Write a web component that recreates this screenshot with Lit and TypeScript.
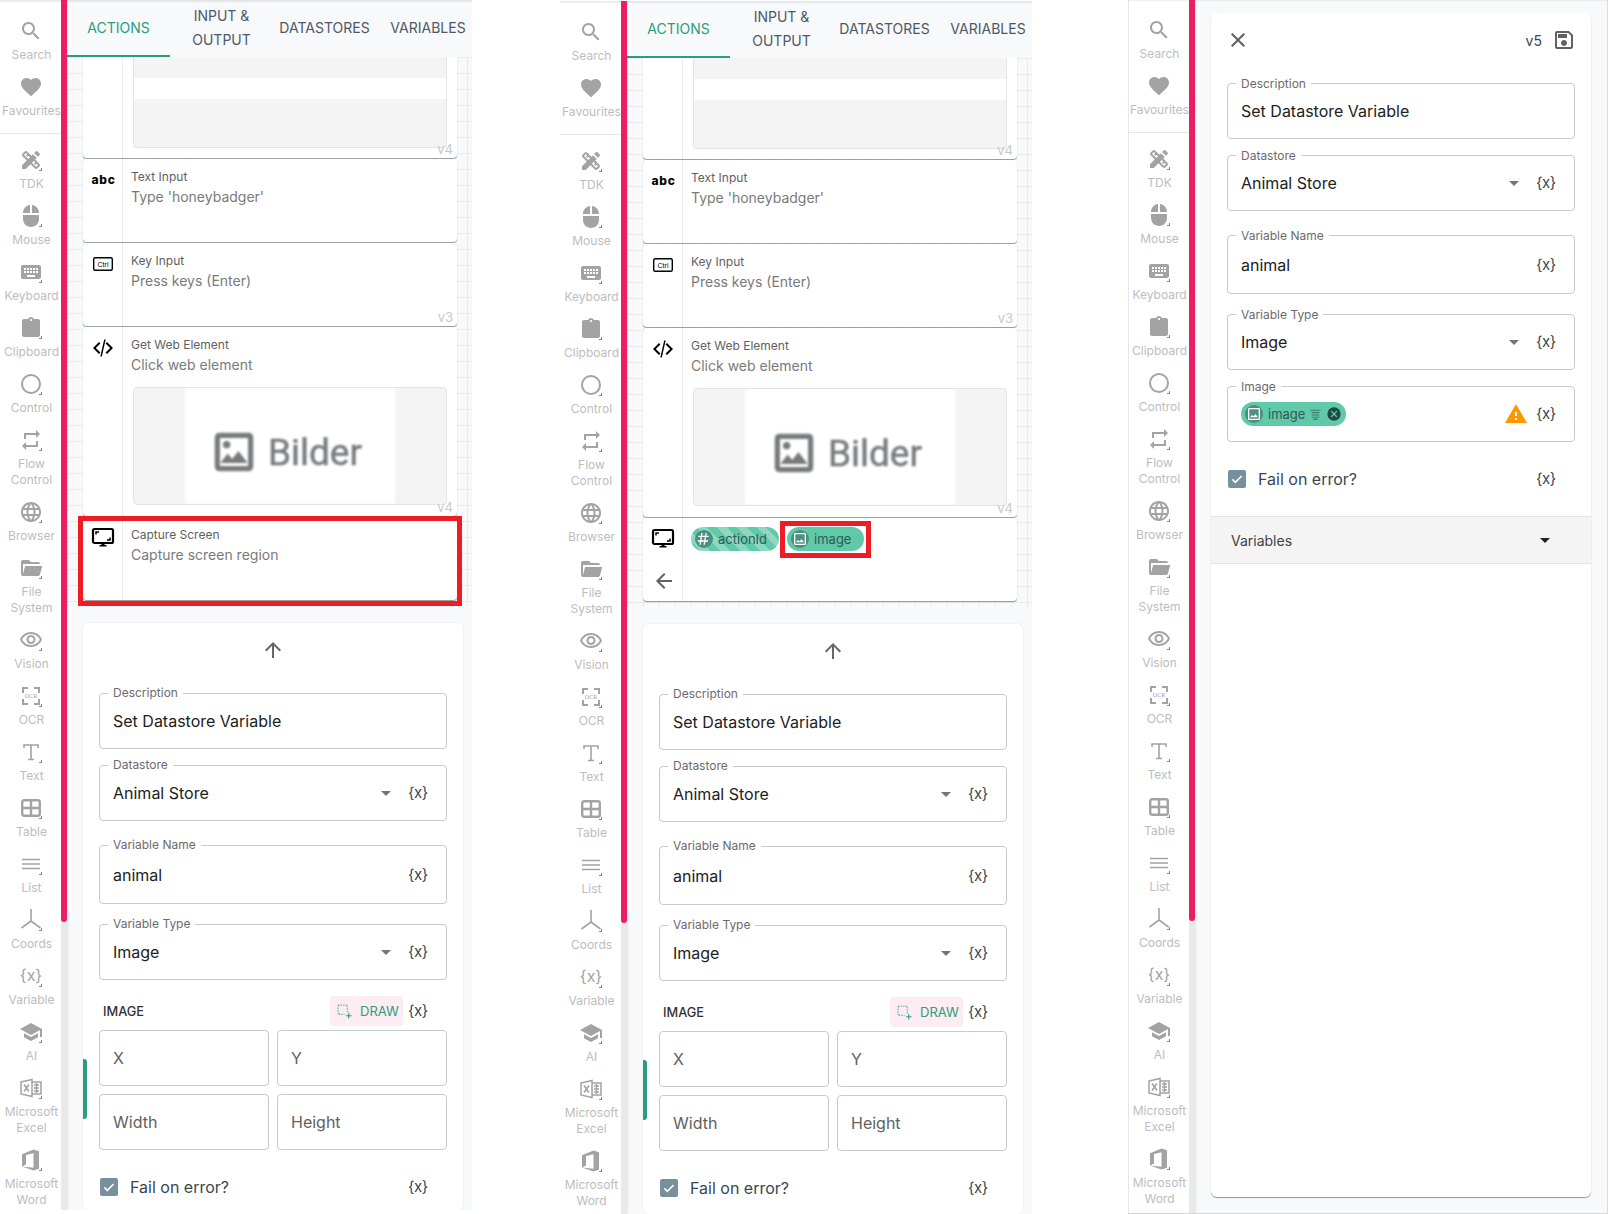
import { LitElement, css, html, svg } from "lit";
import { customElement } from "lit/decorators.js";

const path = (d: string) => svg`<path d=${d} fill="currentColor"></path>`;
const line = (d: string, w = 2) =>
  svg`<path d=${d} fill="none" stroke="currentColor" stroke-width=${w}></path>`;

const ICONS = {
  search: path("M15.5 14h-.79l-.28-.27C15.41 12.59 16 11.11 16 9.5 16 5.91 13.09 3 9.5 3S3 5.91 3 9.5 5.91 16 9.5 16c1.61 0 3.09-.59 4.23-1.57l.27.28v.79l5 4.99L20.49 19l-4.99-5zm-6 0C7.01 14 5 11.99 5 9.5S7.01 5 9.5 5 14 7.01 14 9.5 11.99 14 9.5 14z"),
  heart: path("M12 21.35l-1.45-1.32C5.4 15.36 2 12.28 2 8.5 2 5.42 4.42 3 7.5 3c1.74 0 3.41.81 4.5 2.09C13.09 3.81 14.76 3 16.5 3 19.58 3 22 5.42 22 8.5c0 3.78-3.4 6.86-8.55 11.54L12 21.35z"),
  tools: path("M16.24 11.51l1.57-1.57-3.75-3.75-1.57 1.57-4.14-4.13c-.78-.78-2.05-.78-2.83 0l-1.9 1.9c-.78.78-.78 2.05 0 2.83l4.13 4.13L3 17.25V21h3.75l4.76-4.76 4.13 4.13c.95.95 2.23.6 2.83 0l1.9-1.9c.78-.78.78-2.05 0-2.83l-4.13-4.13zm-7.06-.44L5.04 6.94l1.89-1.9L8.2 6.31 7.02 7.5l1.41 1.41 1.19-1.19 1.45 1.45-1.89 1.9zm7.88 7.89l-4.13-4.14 1.9-1.9 1.45 1.45-1.19 1.19 1.41 1.41 1.19-1.19 1.27 1.27-1.9 1.91zM20.71 7.04a.996.996 0 000-1.41l-2.34-2.34c-.47-.47-1.12-.29-1.41 0l-1.83 1.83 3.75 3.75 1.83-1.83z"),
  mouse: path("M13 1.07V9h7c0-4.08-3.05-7.44-7-7.93zM4 15c0 4.42 3.58 8 8 8s8-3.58 8-8v-4H4v4zm7-13.93C7.05 1.56 4 4.92 4 9h7V1.07z"),
  keyboard: path("M20 5H4c-1.1 0-1.99.9-1.99 2L2 17c0 1.1.9 2 2 2h16c1.1 0 2-.9 2-2V7c0-1.1-.9-2-2-2zm-9 3h2v2h-2V8zm0 3h2v2h-2v-2zM8 8h2v2H8V8zm0 3h2v2H8v-2zm-1 2H5v-2h2v2zm0-3H5V8h2v2zm9 7H8v-2h8v2zm0-4h-2v-2h2v2zm0-3h-2V8h2v2zm3 3h-2v-2h2v2zm0-3h-2V8h2v2z"),
  clipboard: path("M19 3h-4.18C14.4 1.84 13.3 1 12 1c-1.3 0-2.4.84-2.82 2H5c-1.1 0-2 .9-2 2v14c0 1.1.9 2 2 2h14c1.1 0 2-.9 2-2V5c0-1.1-.9-2-2-2zm-7 0c.55 0 1 .45 1 1s-.45 1-1 1-1-.45-1-1 .45-1 1-1z"),
  control: svg`<circle cx="12" cy="12" r="9" fill="none" stroke="currentColor" stroke-width="2"></circle>`,
  flow: path("M7 7h10v3l4-4-4-4v3H5v6h2V7zm10 10H7v-3l-4 4 4 4v-3h12v-6h-2v4z"),
  globe: path("M11.99 2C6.47 2 2 6.48 2 12s4.47 10 9.99 10C17.52 22 22 17.52 22 12S17.52 2 11.99 2zm6.93 6h-2.95c-.32-1.25-.78-2.45-1.38-3.56 1.84.63 3.37 1.91 4.33 3.56zM12 4.04c.83 1.2 1.48 2.53 1.91 3.96h-3.82c.43-1.43 1.08-2.76 1.91-3.96zM4.26 14C4.1 13.36 4 12.69 4 12s.1-1.36.26-2h3.38c-.08.66-.14 1.32-.14 2 0 .68.06 1.34.14 2H4.26zm.82 2h2.95c.32 1.25.78 2.45 1.38 3.56-1.84-.63-3.37-1.9-4.33-3.56zm2.95-8H5.08c.96-1.66 2.49-2.93 4.33-3.56C8.81 5.55 8.35 6.75 8.03 8zM12 19.96c-.83-1.2-1.48-2.53-1.91-3.96h3.82c-.43 1.43-1.08 2.76-1.91 3.96zM14.34 14H9.66c-.09-.66-.16-1.32-.16-2 0-.68.07-1.35.16-2h4.68c.09.65.16 1.32.16 2 0 .68-.07 1.34-.16 2zm.25 5.56c.6-1.11 1.06-2.31 1.38-3.56h2.95c-.96 1.65-2.49 2.93-4.33 3.56zM16.36 14c.08-.66.14-1.32.14-2 0-.68-.06-1.34-.14-2h3.38c.16.64.26 1.31.26 2s-.1 1.36-.26 2h-3.38z"),
  folder: path("M19 20H4c-1.11 0-2-.9-2-2V6c0-1.11.89-2 2-2h6l2 2h7a2 2 0 012 2H4v10l2.14-8h17.07l-2.28 8.5c-.23.87-1.01 1.5-1.93 1.5z"),
  eye: path("M12 6c3.79 0 7.17 2.13 8.82 5.5C19.17 14.87 15.79 17 12 17s-7.17-2.13-8.82-5.5C4.83 8.13 8.21 6 12 6m0-2C7 4 2.73 7.11 1 11.5 2.73 15.89 7 19 12 19s9.27-3.11 11-7.5C21.27 7.11 17 4 12 4zm0 5c1.38 0 2.5 1.12 2.5 2.5S13.38 14 12 14s-2.5-1.12-2.5-2.5S10.62 9 12 9m0-2c-2.48 0-4.5 2.02-4.5 4.5S9.52 16 12 16s4.5-2.02 4.5-4.5S14.48 7 12 7z"),
  ocr: svg`${line("M4 9V4h5M15 4h5v5M20 15v5h-5M9 20H4v-5")}<text x="12" y="14" font-size="6" text-anchor="middle" font-family="Liberation Serif, serif" fill="currentColor">OCR</text>`,
  text: svg`${line("M5 8V5h14v3M12 5v14.5M9 19.5h6", 1.6)}`,
  table: svg`<rect x="3.2" y="4.2" width="17.6" height="15.6" rx="2" fill="none" stroke="currentColor" stroke-width="2.4"></rect>${line("M3 12h18M12 4v16", 2.4)}`,
  list: svg`${line("M3 7.5h18M3 12h18M3 16.5h18", 1.6)}`,
  coords: svg`${line("M12 1v12M12 13L2.5 20M12 13l9.5 7", 1.6)}`,
  variable: svg`<text x="12" y="17" font-size="16" text-anchor="middle" font-family="Inter, sans-serif" fill="currentColor">{x}</text>`,
  school: path("M5 13.18v4L12 21l7-3.82v-4L12 17l-7-3.82zM12 3L1 9l11 6 9-4.91V17h2V9L12 3z"),
  excel: svg`${line("M2 6l11-2.5v17L2 18zM13 6h9v12h-9", 1.5)}${line("M5 8.5l5 7M10 8.5l-5 7", 1.6)}${line("M15 9h5M15 12h5M15 15h5M17.5 7v10", 1.5)}`,
  word: path("M3 6.2L14.5 1.5 20 3.2v17.6l-5.5 1.7L3 18.4l11.5 1.4V5.3L7 7v9.5L3 18.4z"),
  code: path("M9.4 16.6L4.8 12l4.6-4.6L8 6l-6 6 6 6 1.4-1.4zm5.2 0l4.6-4.6-4.6-4.6L16 6l6 6-6 6-1.4-1.4zM13.2 3.5h1.5L10.8 20.5H9.3z"),
  ctrl: svg`<rect x="2.7" y="5.7" width="18.6" height="12.6" rx="1.5" fill="none" stroke="currentColor" stroke-width="1.4"></rect><text x="12" y="14.6" font-size="7" text-anchor="middle" font-family="Liberation Sans, sans-serif" fill="currentColor">Ctrl</text>`,
  monitor: svg`<rect x="2" y="3" width="20" height="14" rx="1.5" fill="none" stroke="currentColor" stroke-width="2.2"></rect>${line("M5 8.5V6h3M19 11.5V14h-3", 1.5)}${path("M10.5 17h3v2h2v1.6h-7V19h2z")}`,
  up: path("M4 12l1.41 1.41L11 7.83V20h2V7.83l5.58 5.59L20 12l-8-8-8 8z"),
  back: path("M20 11H7.83l5.59-5.59L12 4l-8 8 8 8 1.41-1.41L7.83 13H20v-2z"),
  close: path("M19 6.41L17.59 5 12 10.59 6.41 5 5 6.41 10.59 12 5 17.59 6.41 19 12 13.41 17.59 19 19 17.59 13.41 12z"),
  save: path("M17 3H5c-1.11 0-2 .9-2 2v14c0 1.1.89 2 2 2h14c1.1 0 2-.9 2-2V7l-4-4zm2 16H5V5h11.17L19 7.83V19zm-7-7c-1.66 0-3 1.34-3 3s1.34 3 3 3 3-1.34 3-3-1.34-3-3-3zM6 6h9v4H6z"),
  warning: path("M1 21h22L12 2 1 21zm12-3h-2v-2h2v2zm0-4h-2v-4h2v4z"),
  image: path("M19 5v14H5V5h14m0-2H5c-1.1 0-2 .9-2 2v14c0 1.1.9 2 2 2h14c1.1 0 2-.9 2-2V5c0-1.1-.9-2-2-2zm-4.86 8.86l-3 3.87L9 13.14 6 17h12l-3.86-5.14z"),
  imageDot: svg`${path("M19 5v14H5V5h14m0-2H5c-1.1 0-2 .9-2 2v14c0 1.1.9 2 2 2h14c1.1 0 2-.9 2-2V5c0-1.1-.9-2-2-2zm-4.86 8.86l-3 3.87L9 13.14 6 17h12l-3.86-5.14z")}<circle cx="8.5" cy="8.5" r="1.5" fill="currentColor"></circle>`,
  hash: path("M10 3L9.3 7h4.2l.7-4h2l-.7 4H19v2h-3.9l-.8 5H18v2h-4l-.7 4.5h-2L12 16H7.8l-.7 4.5h-2L5.8 16H2.5v-2h3.7l.8-5H3.5V7h3.9L8 3h2zM9 9l-.8 5h4.2l.8-5H9z"),
  lines: svg`${line("M3 4h18M5 8.5h14M5 13h14M5 17h14M8 21h8", 2)}`,
  clear: path("M12 2a10 10 0 100 20 10 10 0 000-20zm5 13.6L15.6 17 12 13.4 8.4 17 7 15.6l3.6-3.6L7 8.4 8.4 7l3.6 3.6L15.6 7 17 8.4 13.4 12l3.6 3.6z"),
  check: svg`${line("M5 12.5l4.5 4.5L19 7.5", 2.4)}`,
  draw: svg`<path d="M3 3h13v11M3 3v13h9" fill="none" stroke="currentColor" stroke-width="1.2" stroke-dasharray="2 1.5"></path>${line("M18 14v8M14 18h8", 1.6)}`,
};

type IconName = keyof typeof ICONS;

const RAIL: { icon: IconName; label: string[]; mark?: boolean }[][] = [
  [
    { icon: "search", label: ["Search"] },
    { icon: "heart", label: ["Favourites"] },
  ],
  [
    { icon: "tools", label: ["TDK"], mark: true },
    { icon: "mouse", label: ["Mouse"], mark: true },
    { icon: "keyboard", label: ["Keyboard"], mark: true },
    { icon: "clipboard", label: ["Clipboard"], mark: true },
    { icon: "control", label: ["Control"], mark: true },
    { icon: "flow", label: ["Flow", "Control"], mark: true },
    { icon: "globe", label: ["Browser"], mark: true },
    { icon: "folder", label: ["File", "System"], mark: true },
    { icon: "eye", label: ["Vision"], mark: true },
    { icon: "ocr", label: ["OCR"], mark: true },
    { icon: "text", label: ["Text"], mark: true },
    { icon: "table", label: ["Table"], mark: true },
    { icon: "list", label: ["List"], mark: true },
    { icon: "coords", label: ["Coords"], mark: true },
    { icon: "variable", label: ["Variable"], mark: true },
    { icon: "school", label: ["AI"], mark: true },
    { icon: "excel", label: ["Microsoft", "Excel"], mark: true },
    { icon: "word", label: ["Microsoft", "Word"], mark: true },
  ],
];

const TABS = [
  { label: "ACTIONS", width: 103, active: true },
  { label: "INPUT & OUTPUT", width: 103 },
  { label: "DATASTORES", width: 103 },
  { label: "VARIABLES", width: 104 },
];

const icon = (name: IconName, cls = "") =>
  html`<svg class="icon ${cls}" viewBox="0 0 24 24">${ICONS[name]}</svg>`;

@customElement("app-root")
export class AppRoot extends LitElement {
  static styles = css`
    :host {
      display: block;
      width: 1619px;
      height: 1214px;
      overflow: hidden;
      background: #fff;
      font-family: Inter, "Liberation Sans", sans-serif;
    }
    * {
      box-sizing: border-box;
    }
    .page {
      display: flex;
      align-items: flex-start;
      gap: 88px;
    }
    .panel {
      position: relative;
      display: flex;
      width: 472px;
      height: 1210px;
      overflow: hidden;
      flex: none;
    }
    .panel::after {
      content: "";
      position: absolute;
      inset: 0 0 auto 0;
      height: 3px;
      background: linear-gradient(rgba(0, 0, 0, 0.1), rgba(0, 0, 0, 0));
    }
    .panel.second {
      margin-top: 1px;
      height: 1213px;
    }
    .panel.third {
      margin-top: -1px;
      margin-left: 8px;
      width: 480px;
      height: 1215px;
      border-right: 1px solid #dcdcdc;
      border-bottom: 1px solid #d4d4d4;
    }
    .icon {
      display: block;
      width: 24px;
      height: 24px;
      flex: none;
    }

    .rail {
      width: 61px;
      flex: none;
      padding: 19px 0 0;
      background: #fff;
      color: #bdbdbd;
      font-size: 12px;
      line-height: 16px;
      text-align: center;
    }
    .third .rail {
      box-shadow: inset 1px 0 0 #e6e6e6;
    }
    .rail-group + .rail-group {
      margin-top: 14px;
      padding-top: 14px;
      border-top: 1px solid #e6e6e6;
    }
    .tool {
      display: flex;
      flex-direction: column;
      align-items: center;
      margin-bottom: 12px;
      padding-left: 2px;
      white-space: nowrap;
    }
    .tool-icon {
      position: relative;
      width: 24px;
      height: 24px;
      margin-bottom: 4px;
      margin-left: -1px;
      color: #a3a3a3;
    }
    .tool-icon.mark::after {
      content: "";
      position: absolute;
      right: 1px;
      bottom: 1px;
      width: 2px;
      height: 2px;
      border-right: 1px solid #888;
      border-bottom: 1px solid #888;
    }
    .scroll {
      width: 6px;
      height: 100%;
      flex: none;
      background: #e9e9e9;
      box-shadow: 1px 0 2px rgba(0, 0, 0, 0.08);
      z-index: 1;
    }
    .thumb {
      height: 922px;
      background: #eb1e63;
      border-radius: 0 0 3px 3px;
    }

    .main {
      flex: 1;
      min-width: 0;
      display: flex;
      flex-direction: column;
      background: #f8f9fb;
    }
    .tabs {
      display: flex;
      height: 57px;
      flex: none;
    }
    .tab {
      display: flex;
      align-items: center;
      justify-content: center;
      flex: none;
      text-align: center;
      font-size: 14px;
      line-height: 24px;
      color: #4d5866;
      border-bottom: 2px solid transparent;
    }
    .tab.active {
      color: #2a9d7f;
      border-bottom-color: #2a9d7f;
    }

    .actions {
      height: 549px;
      flex: none;
      display: flex;
      flex-direction: column;
      gap: 1px;
      padding: 0 15px 0 16px;
      overflow: hidden;
      background-color: #f8f9fb;
      background-image: linear-gradient(#e8eaed 1px, transparent 1px),
        linear-gradient(90deg, #e8eaed 1px, transparent 1px);
      background-size: 16px 16px;
    }
    .card {
      position: relative;
      display: flex;
      width: 374px;
      min-height: 83px;
      flex: none;
      background: #fff;
      border-radius: 4px;
      box-shadow: 0 1px 1px rgba(0, 0, 0, 0.4);
    }
    .card.cut {
      height: 101px;
      min-height: 0;
      border-radius: 0 0 4px 4px;
    }
    .card-icon {
      position: relative;
      width: 40px;
      flex: none;
      display: flex;
      justify-content: center;
      padding-top: 9px;
      color: #000;
      border-right: 1px solid #ececec;
    }
    .abc {
      margin-left: 2px;
      font-size: 12px;
      font-weight: 800;
      line-height: 24px;
      letter-spacing: 0.7px;
    }
    .back {
      position: absolute;
      left: 9px;
      top: 51px;
      color: #616161;
    }
    .card-body {
      flex: 1;
      min-width: 0;
      padding: 10px 10px 11px 8px;
    }
    .cut .card-body {
      padding-top: 0;
    }
    .title {
      font-size: 12px;
      line-height: 16px;
      color: #616161;
    }
    .desc {
      margin-top: 2px;
      font-size: 14px;
      line-height: 20px;
      color: #7a7a7a;
    }
    .version {
      position: absolute;
      right: 4px;
      bottom: 1px;
      font-size: 13px;
      line-height: 16px;
      color: #c9c9c9;
    }
    .shot {
      display: flex;
      justify-content: center;
      height: 118px;
      margin: 12px 0 0 2px;
      overflow: hidden;
      background: #f4f4f4;
      border: 1px solid #e4e4e4;
      border-radius: 4px;
    }
    .shot-white {
      display: flex;
      align-items: center;
      justify-content: center;
      gap: 15px;
      width: 210px;
      padding: 12px 3px 0 0;
      background: #fff;
      color: #77797c;
      font-family: Roboto, sans-serif;
      font-size: 37px;
      -webkit-text-stroke: 0.4px #77797c;
      filter: blur(0.8px);
    }
    .shot-white .icon {
      width: 50px;
      height: 50px;
      margin: 0 -6px;
      stroke: currentColor;
      stroke-width: 0.5;
      stroke-linejoin: round;
    }
    .stub {
      height: 91px;
      margin-left: 2px;
      background: linear-gradient(#f4f4f4 21px, #fff 21px, #fff 42px, #f4f4f4 42px);
      border: 1px solid #e4e4e4;
      border-top: 0;
      border-radius: 0 0 4px 4px;
    }
    .frame {
      position: absolute;
      border: 5px solid #ee1c25;
      pointer-events: none;
    }
    .frame.capture {
      inset: -1px -5px -6px -5px;
    }
    .frame.chip-frame {
      inset: -6px -7px -7px -7px;
    }
    .chips {
      display: flex;
      gap: 8px;
      margin-top: -1px;
    }
    .chip {
      position: relative;
      display: inline-flex;
      align-items: center;
      height: 24px;
      padding: 0 13px 0 4px;
      border-radius: 12px;
      background: #5fc9a8;
      color: #2f5a58;
      font-size: 13px;
      white-space: nowrap;
    }
    .chip.striped {
      padding-right: 12px;
      background: repeating-linear-gradient(45deg, #5fc9a8, #5fc9a8 7px, #8ed7c0 7px, #8ed7c0 14px);
    }
    .chip-icon {
      display: flex;
      align-items: center;
      justify-content: center;
      width: 18px;
      height: 18px;
      margin-right: 5px;
      border-radius: 50%;
      background: #4b8f80;
      color: #fff;
    }
    .chip-icon .icon {
      width: 16px;
      height: 16px;
    }
    .chip.in-field {
      padding-right: 4px;
    }
    .chip-lines {
      width: 13px;
      height: 13px;
      margin: 0 4px 0 4px;
      color: #3d7d72;
    }
    .chip-clear {
      width: 16px;
      height: 16px;
      color: #1f4a4a;
    }

    .lower {
      flex: 1;
      min-height: 0;
      display: flex;
      padding: 17px 9px 0 16px;
    }
    .form {
      position: relative;
      flex: 1;
      min-width: 0;
      padding-top: 15px;
      background: #fff;
      border-radius: 6px;
      box-shadow: 0 0 3px rgba(0, 0, 0, 0.07);
    }
    .form-top {
      display: flex;
      justify-content: center;
      margin-bottom: 31px;
      color: #666;
    }
    .tag {
      position: absolute;
      left: 0;
      top: 436px;
      width: 4px;
      height: 60px;
      background: #2a9d7f;
      border-radius: 0 3px 3px 0;
    }
    .fields {
      padding: 0 16px;
    }
    .field {
      position: relative;
      display: flex;
      align-items: center;
      height: 56px;
      margin-top: 16px;
      padding: 0 20px 0 13px;
      border: 1px solid #cacaca;
      border-radius: 4px;
      font-size: 16px;
      color: #212121;
    }
    .field:first-child {
      margin-top: 0;
    }
    .field.tall {
      height: 59px;
      margin-top: 24px;
      margin-bottom: 20px;
    }
    .field.tall + .field {
      margin-top: 0;
    }
    .legend {
      position: absolute;
      left: 8px;
      top: -9px;
      padding: 0 5px;
      background: #fff;
      font-size: 12px;
      line-height: 16px;
      color: #6b6b6b;
    }
    .third .legend {
      top: -8px;
    }
    .grow {
      flex: 1;
      min-width: 0;
    }
    .caret {
      width: 0;
      height: 0;
      margin-right: 17px;
      border: 5px solid transparent;
      border-top-color: #757575;
      border-bottom: 0;
    }
    .fx {
      flex: none;
      width: 18px;
      padding-bottom: 1px;
      text-align: center;
      font-size: 15px;
      letter-spacing: -0.4px;
      color: #37474f;
    }
    .warn {
      margin-right: 8px;
      color: #ff9800;
    }
    .image-head {
      display: flex;
      align-items: center;
      height: 30px;
      margin-top: 16px;
      padding: 0 21px 0 4px;
    }
    .image-title {
      flex: 1;
      font-size: 12.8px;
      font-weight: 500;
      color: #333;
    }
    .draw {
      display: flex;
      align-items: center;
      gap: 7px;
      height: 30px;
      width: 73px;
      margin-right: 5px;
      padding-left: 6px;
      background: #fdecf1;
      border-radius: 4px;
      color: #2a9d7f;
      font-size: 13px;
    }
    .draw .icon {
      width: 17px;
      height: 17px;
    }
    .coords {
      display: grid;
      grid-template-columns: 1fr 1fr;
      gap: 8px;
      margin-top: 4px;
    }
    .coords .field {
      margin: 0;
      color: #616161;
    }
    .fail {
      display: flex;
      align-items: center;
      height: 24px;
      margin-top: 25px;
      padding: 0 21px 0 1px;
      font-size: 16px;
      color: #37474f;
    }
    .box {
      display: flex;
      align-items: center;
      justify-content: center;
      width: 18px;
      height: 18px;
      margin-right: 12px;
      background: #78909c;
      border-radius: 2px;
      color: #fff;
    }
    .box .icon {
      width: 16px;
      height: 16px;
    }

    .editor {
      flex: 1;
      min-height: 0;
      padding: 14px 16px 0;
    }
    .editor .form {
      height: 1184px;
      box-shadow: 0 1px 1px rgba(0, 0, 0, 0.4);
    }
    .form-head {
      display: flex;
      align-items: center;
      height: 24px;
      margin-bottom: 31px;
      padding: 0 15px;
      color: #616161;
    }
    .v5 {
      margin-right: 10px;
      font-size: 14px;
      color: #37474f;
    }
    .accordion {
      display: flex;
      align-items: center;
      justify-content: space-between;
      height: 48px;
      margin-top: 25px;
      padding: 1px 41px 0 20px;
      background: #f4f4f4;
      border-top: 1px solid #e4e4e4;
      border-bottom: 1px solid #e4e4e4;
      font-size: 14px;
      color: #424242;
    }
    .accordion .caret {
      margin-right: 0;
      border-top-color: #212121;
    }
  `;

  private rail() {
    return html`
      <nav class="rail">
        ${RAIL.map(
          (group) => html`
            <div class="rail-group">
              ${group.map(
                (t) => html`
                  <div class="tool">
                    <div class="tool-icon ${t.mark ? "mark" : ""}">${icon(t.icon)}</div>
                    ${t.label.map((l) => html`<div>${l}</div>`)}
                  </div>
                `
              )}
            </div>
          `
        )}
      </nav>
      <div class="scroll"><div class="thumb"></div></div>
    `;
  }

  private tabs() {
    return html`
      <div class="tabs">
        ${TABS.map(
          (t) => html`
            <div class="tab ${t.active ? "active" : ""}" style="width: ${t.width}px">${t.label}</div>
          `
        )}
      </div>
    `;
  }

  private card(iconEl: unknown, title: string, desc: string, version = "", extra: unknown = "") {
    return html`
      <div class="card">
        <div class="card-icon">${iconEl}</div>
        <div class="card-body">
          <div class="title">${title}</div>
          <div class="desc">${desc}</div>
          ${extra}
        </div>
        ${version ? html`<span class="version">${version}</span>` : ""}
      </div>
    `;
  }

  private actions(chips: boolean) {
    const shot = html`
      <div class="shot">
        <div class="shot-white">${icon("imageDot")}<span>Bilder</span></div>
      </div>
    `;
    return html`
      <div class="actions">
        <div class="card cut">
          <div class="card-icon"></div>
          <div class="card-body"><div class="stub"></div></div>
          <span class="version">v4</span>
        </div>
        ${this.card(html`<span class="abc">abc</span>`, "Text Input", "Type 'honeybadger'")}
        ${this.card(icon("ctrl"), "Key Input", "Press keys (Enter)", "v3")}
        ${this.card(icon("code"), "Get Web Element", "Click web element", "v4", shot)}
        ${chips
          ? html`
              <div class="card">
                <div class="card-icon">${icon("monitor")}<span class="back">${icon("back")}</span></div>
                <div class="card-body">
                  <div class="chips">
                    <span class="chip striped"
                      ><span class="chip-icon">${icon("hash")}</span>actionId</span
                    >
                    <span class="chip"
                      ><span class="chip-icon">${icon("image")}</span>image
                      <span class="frame chip-frame"></span
                    ></span>
                  </div>
                </div>
              </div>
            `
          : html`
              <div class="card">
                <div class="card-icon">${icon("monitor")}</div>
                <div class="card-body">
                  <div class="title">Capture Screen</div>
                  <div class="desc">Capture screen region</div>
                </div>
                <span class="frame capture"></span>
              </div>
            `}
      </div>
    `;
  }

  private field(label: string, value: unknown, opts: { select?: boolean; tall?: boolean } = {}) {
    return html`
      <div class="field ${opts.tall ? "tall" : ""}">
        <span class="legend">${label}</span>
        <span class="grow">${value}</span>
        ${opts.select ? html`<span class="caret"></span>` : ""}
        <span class="fx">{x}</span>
      </div>
    `;
  }

  private commonFields() {
    return html`
      <div class="field">
        <span class="legend">Description</span>
        <span class="grow">Set Datastore Variable</span>
      </div>
      ${this.field("Datastore", "Animal Store", { select: true })}
      ${this.field("Variable Name", "animal", { tall: true })}
      ${this.field("Variable Type", "Image", { select: true })}
    `;
  }

  private failRow() {
    return html`
      <div class="fail">
        <span class="box">${icon("check")}</span>
        <span class="grow">Fail on error?</span>
        <span class="fx">{x}</span>
      </div>
    `;
  }

  private lower() {
    return html`
      <div class="lower">
        <div class="form">
          <div class="tag"></div>
          <div class="form-top">${icon("up")}</div>
          <div class="fields">
            ${this.commonFields()}
            <div class="image-head">
              <span class="image-title">IMAGE</span>
              <span class="draw">${icon("draw")}DRAW</span>
              <span class="fx">{x}</span>
            </div>
            <div class="coords">
              ${["X", "Y", "Width", "Height"].map((c) => html`<div class="field">${c}</div>`)}
            </div>
            ${this.failRow()}
          </div>
        </div>
      </div>
    `;
  }

  private editor() {
    return html`
      <div class="editor">
        <div class="form">
          <div class="form-head">
            ${icon("close")}
            <span class="grow"></span>
            <span class="v5">v5</span>
            ${icon("save")}
          </div>
          <div class="fields">
            ${this.commonFields()}
            <div class="field">
              <span class="legend">Image</span>
              <span class="grow">
                <span class="chip in-field">
                  <span class="chip-icon">${icon("image")}</span>image
                  ${icon("lines", "chip-lines")}${icon("clear", "chip-clear")}
                </span>
              </span>
              ${icon("warning", "warn")}
              <span class="fx">{x}</span>
            </div>
            ${this.failRow()}
          </div>
          <div class="accordion"><span>Variables</span><span class="caret"></span></div>
        </div>
      </div>
    `;
  }

  render() {
    return html`
      <div class="page">
        <section class="panel">
          ${this.rail()}
          <div class="main">${this.tabs()} ${this.actions(false)} ${this.lower()}</div>
        </section>
        <section class="panel second">
          ${this.rail()}
          <div class="main">${this.tabs()} ${this.actions(true)} ${this.lower()}</div>
        </section>
        <section class="panel third">
          ${this.rail()}
          <div class="main">${this.editor()}</div>
        </section>
      </div>
    `;
  }
}
